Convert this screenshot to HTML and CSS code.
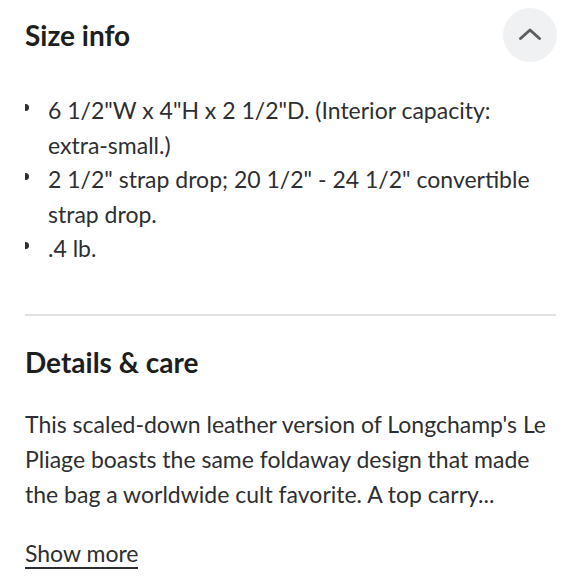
FILE: index.html
```html
<!DOCTYPE html>
<html lang="en">
<head>
<meta charset="utf-8">
<link rel="stylesheet" href="styles.css">
</head>
<body>
<main class="page">
  <section class="size">
    <header class="size-head">
      <h2 class="title">Size info</h2>
      <button class="toggle" aria-label="Collapse">
        <svg width="24" height="14" viewBox="0 0 24 14"><path d="M2.5 11.5 L12 3 L21.5 11.5" fill="none" stroke="#5b5e63" stroke-width="3" stroke-linecap="round" stroke-linejoin="round"/></svg>
      </button>
    </header>
    <ul class="specs">
      <li class="spec">6 1/2"W x 4"H x 2 1/2"D. (Interior capacity: extra-small.)</li>
      <li class="spec">2 1/2" strap drop; 20 1/2" - 24 1/2" convertible strap drop.</li>
      <li class="spec">.4 lb.</li>
    </ul>
  </section>
  <hr class="divider">
  <section class="details">
    <h2 class="title">Details &amp; care</h2>
    <p class="desc">This scaled-down leather version of Longchamp's Le Pliage boasts the same foldaway design that made the bag a worldwide cult favorite. A top carry...</p>
    <a class="more" href="#">Show more</a>
  </section>
</main>
</body>
</html>
```
FILE: styles.css
```css
* { box-sizing: border-box; }
html, body { margin: 0; padding: 0; background: #fff; }
body {
  font-family: Lato, "Noto Sans", sans-serif;
  color: #2e2f32;
  -webkit-font-smoothing: antialiased;
}
.page { padding: 8px 24px 0 25px; }
.size-head {
  display: flex;
  justify-content: space-between;
  align-items: center;
}
.title {
  margin: 0;
  font-size: 28px;
  font-weight: 700;
  color: #1d1e20;
  letter-spacing: 0;
}
.toggle {
  width: 54px;
  height: 54px;
  border: 0;
  border-radius: 50%;
  background: #f0f1f2;
  display: flex;
  align-items: center;
  justify-content: center;
  padding: 0;
  margin-right: -1px;
}
.toggle svg { display: block; margin-top: -2px; }
.specs {
  list-style: none;
  margin: 31px 0 0;
  padding: 0;
}
.spec {
  position: relative;
  padding-left: 23px;
  font-size: 23px;
  line-height: 34.6px;
}
.spec::before {
  content: "";
  position: absolute;
  left: 0;
  top: 11px;
  width: 4px;
  height: 7px;
  background: #2e2f32;
  border-radius: 0 4px 4px 0;
}
.divider {
  margin: 48px 0 0;
  border: 0;
  height: 2px;
  background: #e1e2e3;
}
.details .title { margin-top: 29px; }
.desc {
  margin: 0;
  padding-top: 28px;
  font-size: 23px;
  line-height: 34.8px;
}
.more {
  display: inline-block;
  margin-top: 28px;
  font-size: 23px;
  color: #2e2f32;
  text-decoration: none;
  border-bottom: 2px solid #2e2f32;
  line-height: 28px;
}
```
